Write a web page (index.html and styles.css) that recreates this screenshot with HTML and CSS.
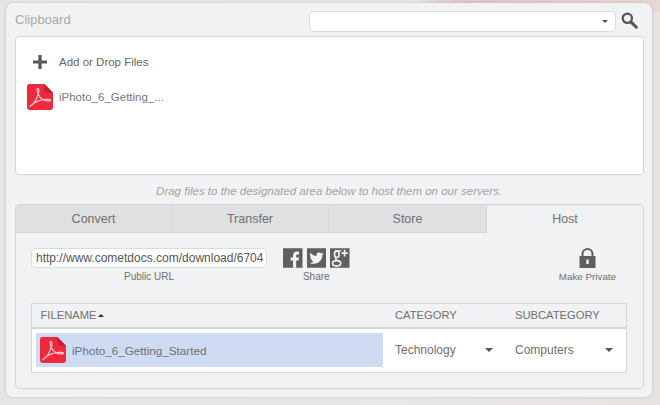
FILE: index.html
```html
<!DOCTYPE html>
<html lang="en">
<head>
<meta charset="utf-8">
<title>Clipboard</title>
<link rel="stylesheet" href="styles.css">
</head>
<body>
<svg class="defs" width="0" height="0" aria-hidden="true">
  <symbol id="pdf" viewBox="0 0 27 27">
    <path d="M2.500 0H18L27 9V24.500A2.500 2.500 0 0 1 24.500 27H2.500A2.500 2.500 0 0 1 0 24.500V2.500A2.500 2.500 0 0 1 2.500 0Z" fill="#ee2a3c"/>
    <path d="M18 0L27 9H20A2 2 0 0 1 18 7Z" fill="#c9202f"/>
    <path d="M3.500 23C7 21.500 10 16 12 9.500C12.600 7.500 12.500 4.500 11.300 4.500C10 4.500 10.300 8 12 11.500C14 15.500 17.500 18 23.500 17.600C25 17.400 24.800 16.200 22.800 16C18.500 15.600 12 17 8 19.500C5.500 21 4 22.200 3.500 23Z" fill="none" stroke="#f7c9cd" stroke-width="1.300"/>
  </symbol>
</svg>
<main class="panel">
  <header class="top">
    <h1 class="title">Clipboard</h1>
    <div class="search">
      <div class="search-box"><span class="caret small"></span></div>
      <svg class="glass" viewBox="0 0 18 18"><circle cx="6.700" cy="6.700" r="4.900" fill="none" stroke="#555" stroke-width="2.400"/><path d="M10.500 10.500L16.200 16.200" stroke="#555" stroke-width="3.200" stroke-linecap="round"/></svg>
    </div>
  </header>

  <section class="clipboard">
    <div class="add">
      <svg class="plus" viewBox="0 0 13 13"><path d="M5 0H8V5H13V8H8V13H5V8H0V5H5Z" fill="#595959"/></svg>
      <span>Add or Drop Files</span>
    </div>
    <div class="file">
      <svg class="pdf"><use href="#pdf"/></svg>
      <span>iPhoto_6_Getting_...</span>
    </div>
  </section>

  <p class="hint">Drag files to the designated area below to host them on our servers.</p>

  <section class="tabs-panel">
    <nav class="tabs">
      <div class="tab">Convert</div>
      <div class="tab">Transfer</div>
      <div class="tab">Store</div>
      <div class="tab active">Host</div>
    </nav>

    <div class="tools">
      <div class="tool url-tool">
        <div class="url">http://www.cometdocs.com/download/6704</div>
        <div class="label">Public URL</div>
      </div>
      <div class="tool share">
        <div class="socials">
          <svg class="social" viewBox="0 0 20 20"><rect width="20" height="20" fill="#5f5f5f"/><path d="M13.500 20V12.500H16L16.400 9.500H13.500V7.800C13.500 6.800 13.900 6.300 15 6.300H16.500V3.500C15.900 3.400 15 3.300 14 3.300C11.800 3.300 10.300 4.700 10.300 7.200V9.500H7.800V12.500H10.300V20Z" fill="#f1f2f4"/></svg>
          <svg class="social" viewBox="0 0 20 20"><rect width="20" height="20" fill="#5f5f5f"/><path d="M17 5.600C16.500 5.900 15.900 6 15.300 6.100C15.900 5.700 16.400 5.100 16.600 4.400C16 4.800 15.400 5 14.700 5.200C13.400 3.800 11.200 4 10.200 5.500C9.700 6.200 9.600 7.100 9.800 8C7.200 7.900 4.900 6.600 3.400 4.700C2.600 6.100 3 7.900 4.400 8.800C3.900 8.800 3.400 8.700 3 8.400C3 9.900 4 11.100 5.400 11.400C5 11.500 4.500 11.500 4.100 11.400C4.500 12.600 5.600 13.500 6.900 13.500C5.600 14.500 4 15 2.500 14.800C6.600 17.400 12.200 15.600 14.600 11.500C15.500 10 15.800 8.500 15.600 7C16.200 6.600 16.700 6.100 17 5.600Z" fill="#f1f2f4"/></svg>
          <svg class="social" viewBox="0 0 20 20"><rect width="20" height="20" fill="#5f5f5f"/><ellipse cx="7" cy="6.200" rx="2.400" ry="3.300" fill="none" stroke="#f1f2f4" stroke-width="1.700"/><ellipse cx="6.800" cy="15.500" rx="4.200" ry="2.800" fill="none" stroke="#f1f2f4" stroke-width="1.700"/><path d="M6 9.500C5 11 6.500 11.800 8 13" fill="none" stroke="#f1f2f4" stroke-width="1.500"/><path d="M5 2.600H11.500" stroke="#f1f2f4" stroke-width="1.400"/><path d="M15 1.500V8.500M11.800 5H18.200" stroke="#f1f2f4" stroke-width="1.800"/></svg>
        </div>
        <div class="label">Share</div>
      </div>
      <div class="tool private">
        <svg class="lock" viewBox="0 0 17 20"><path d="M3.500 9V6A5 5 0 0 1 13.500 6V9" fill="none" stroke="#5f5f5f" stroke-width="2"/><path fill-rule="evenodd" d="M0.500 8H16.500V20H0.500ZM7.300 11.500V16H9.700V11.500Z" fill="#5f5f5f"/></svg>
        <div class="label small-label">Make Private</div>
      </div>
    </div>

    <div class="table">
      <div class="row head">
        <div class="cell c-name">FILENAME<span class="sort"></span></div>
        <div class="cell c-cat">CATEGORY</div>
        <div class="cell c-sub">SUBCATEGORY</div>
      </div>
      <div class="row body">
        <div class="cell c-name selected">
          <svg class="pdf"><use href="#pdf"/></svg>
          <span>iPhoto_6_Getting_Started</span>
        </div>
        <div class="cell c-cat">Technology<span class="caret"></span></div>
        <div class="cell c-sub">Computers<span class="caret"></span></div>
      </div>
    </div>
  </section>
</main>
</body>
</html>
```
FILE: styles.css
```css
* { box-sizing: border-box; }
html, body { height: 100%; }
body {
  margin: 0;
  padding: 3px 8px 8px 6px;
  overflow: hidden;
  font-family: "Liberation Sans", Arial, sans-serif;
  color: #666;
  background:
    linear-gradient(100deg, rgba(255,255,255,0) 62%, rgba(222,198,198,.95) 70%, rgba(232,216,212,.95) 100%) top / 100% 12px no-repeat,
    linear-gradient(90deg, #e6e6e4 0%, #e8e8e8 60%, #e8e2e0 100%);
}
.defs { position: absolute; }
.panel {
  width: 646px;
  height: 394px;
  padding: 8px;
  background: #f1f2f4;
  border-radius: 7px;
  box-shadow: 0 0 3px rgba(0,0,0,.18);
}
.top {
  display: flex;
  justify-content: space-between;
  align-items: flex-start;
  height: 25px;
}
.title {
  margin: 1px 0 0 1px;
  font-size: 13px;
  line-height: 16px;
  font-weight: normal;
  color: #a9a9a9;
}
.search { display: flex; align-items: flex-start; gap: 5px; margin-right: 6px; }
.search-box {
  display: flex;
  justify-content: flex-end;
  align-items: center;
  width: 307px;
  height: 21px;
  padding-right: 7px;
  background: #fff;
  border: 1px solid #dcdcdc;
  border-radius: 4px;
}
.glass { width: 17px; height: 17px; margin-top: 1px; }
.clipboard {
  height: 139px;
  width: 629px;
  margin-left: 1px;
  padding: 16px 12px;
  background: #fff;
  border: 1px solid #d5d6d8;
  border-radius: 4px;
}
.add {
  display: flex;
  align-items: center;
  gap: 12px;
  height: 18px;
  margin-left: 5px;
  font-size: 11.500px;
  color: #666;
}
.plus { width: 14px; height: 14px; }
.file {
  display: flex;
  align-items: center;
  gap: 6px;
  margin-top: 13px;
  margin-left: -1px;
  font-size: 11.500px;
  color: #777;
}
.pdf { width: 26px; height: 26px; flex: none; }
.hint {
  margin: 9px 0 5px;
  height: 15px;
  line-height: 15px;
  text-align: center;
  font-size: 11.500px;
  font-style: italic;
  color: #a3a3a3;
}
.tabs-panel {
  width: 629px;
  height: 185px;
  margin-left: 1px;
  background: #f1f2f4;
  border: 1px solid #d3d4d6;
  border-radius: 5px;
}
.tabs { display: grid; grid-template-columns: 156px 157px 158px 1fr; height: 28px; }
.tab {
  display: flex;
  align-items: center;
  justify-content: center;
  font-size: 12.500px;
  color: #707070;
  background: #dfe0e2;
  border-bottom: 1px solid #d3d4d6;
  border-right: 1px solid #d3d4d6;
}
.tab:first-child { border-top-left-radius: 4px; }
.tab.active { background: transparent; border: 0; }
.tools {
  display: flex;
  height: 70px;
  padding: 15px 0 0 15px;
}
.tool { display: flex; flex-direction: column; align-items: center; }
.url-tool { width: 236px; }
.url {
  width: 236px;
  height: 20px;
  padding-left: 4px;
  line-height: 18px;
  font-size: 12px;
  white-space: nowrap;
  overflow: hidden;
  color: #555;
  background: #fff;
  border: 1px solid #dcdcdc;
  border-radius: 4px;
}
.label { margin-top: 2px; font-size: 10px; line-height: 13px; color: #707070; }
.small-label { font-size: 9.800px; }
.share { margin-left: 16px; }
.socials { display: flex; gap: 4px; }
.social { width: 19.500px; height: 20px; display: block; }
.private { margin-left: auto; margin-right: 27px; }
.lock { width: 17px; height: 20px; display: block; }
.table {
  width: 596px;
  margin-left: 15px;
  background: #fff;
  border: 1px solid #d5d6d8;
}
.row { display: grid; grid-template-columns: 352px 119px 1fr; }
.head {
  height: 25px;
  background: #f1f2f4;
  border-bottom: 2px solid #d5d6d8;
  font-size: 11.200px;
  line-height: 22px;
  color: #707070;
}
.head .c-name { padding-left: 8.500px; }
.sort {
  display: inline-block;
  margin-left: 2px;
  vertical-align: 2px;
  border: 3px solid transparent;
  border-top: 0;
  border-bottom: 3px solid #333;
}
.body { height: 43px; padding-top: 4px; font-size: 12px; color: #707070; }
.body .cell { display: flex; align-items: center; height: 34px; }
.selected {
  gap: 6px;
  padding-left: 4px;
  background: #cfdaf3;
}
.c-cat, .c-sub { padding-left: 11px; }
.c-sub { padding-left: 12px; }
.body .c-name { margin-left: 4px; width: 347px; font-size: 11.700px; }
.body .c-cat { justify-content: space-between; padding-right: 10px; }
.body .c-sub { justify-content: space-between; padding-right: 13px; }
.caret {
  display: inline-block;
  border: 4px solid transparent;
  border-bottom: 0;
  border-top: 4px solid #555;
}
.caret.small { border-width: 3px 3.500px 0; }
```
